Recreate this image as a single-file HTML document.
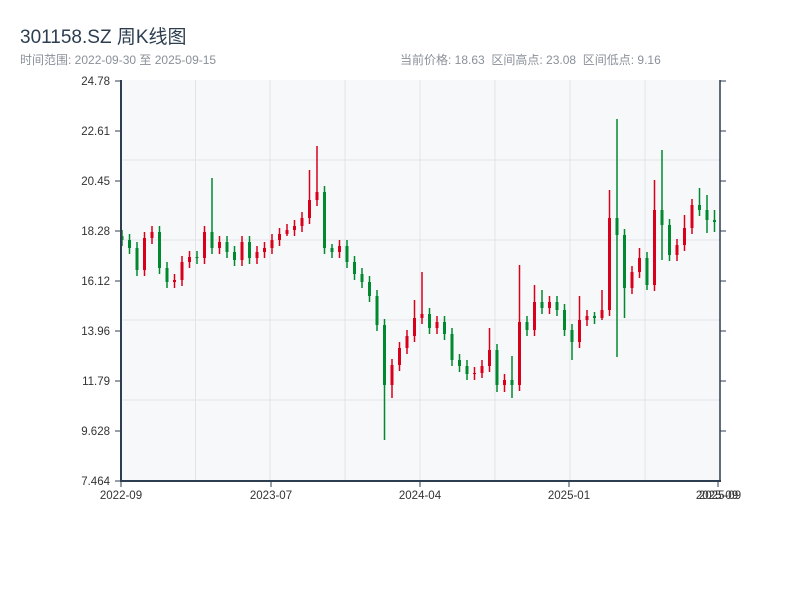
<!DOCTYPE html>
<html><head><meta charset="utf-8"><style>
body{margin:0;width:800px;height:600px;background:#fff;overflow:hidden;font-family:"Liberation Sans","Noto Sans CJK SC",sans-serif;position:relative}
.t{position:absolute;white-space:nowrap}
</style></head><body>
<div class="t" style="left:20px;top:22px;font-size:19px;color:#2c3e50">301158.SZ 周K线图</div>
<div class="t" style="left:20px;top:51px;font-size:12px;color:#8a9099">时间范围: 2022-09-30 至 2025-09-15</div>
<div class="t" style="left:400px;top:51px;font-size:12px;color:#8a9099">当前价格: 18.63 &nbsp;区间高点: 23.08 &nbsp;区间低点: 9.16</div>
<svg width="800" height="600" style="position:absolute;left:0;top:0" font-family="Liberation Sans, sans-serif" font-size="11.5" fill="#333">
<rect x="121" y="80" width="599" height="401" fill="#f7f8fa"/>
<g stroke="#e1e4e8" stroke-width="1">
<path d="M195.5 80V481M270 80V481M345 80V481M420 80V481M495 80V481M570 80V481M645 80V481M121 160H720M121 240H720M121 320H720M121 400H720"/>
</g>
<g stroke="#00892f" fill="none">
<path stroke-width="1.5" d="M122 230V246M129.5 234V254M137 242V276M159.5 226V274M167 262V288M197 251V264M212 178V254M227 236V258M234.5 246V266M249.5 236V264M324.5 186V254M332 244V258M347 240V268M354.5 256V280M362 268V288M369.5 276V302M377 290V331M384.5 319V440M429.5 308V334M444.5 316V340M452 328V366M459.5 354V372M467 360V380M497 344V392M512 356V398M527 316V336M542 290V314M557 296V316M564.5 304V336M572 324V360M594.5 312V324M617 119V357M624.5 229V318M647 252V290M662 150V260M669.5 219V261M699.5 188V216M707 195V233M714.5 210V232"/>
<path stroke-width="3" d="M122 236V240M129.5 240V248M137 248V270M159.5 232V268M167 268V282M197 257V258M212 232V248M227 242V252M234.5 252V260M249.5 242V258M324.5 192V248M332 248V252M347 246V262M354.5 262V274M362 274V282M369.5 282V296M377 296V325M384.5 325V385M429.5 314V328M444.5 322V334M452 334V360M459.5 360V366M467 366V374M497 350V385M512 380V385M527 322V330M542 302V308M557 302V310M564.5 310V330M572 330V342M594.5 316V318M617 218V235M624.5 235V288M647 258V285M662 210V225M669.5 225V255M699.5 205V210M707 210V220M714.5 220V222"/>
</g>
<g stroke="#d9001b" fill="none">
<path stroke-width="1.5" d="M144.5 232V276M152 226V244M174.5 274V288M182 256V286M189.5 251V268M204.5 226V264M219.5 236V254M242 236V266M257 246V264M264.5 242V258M272 234V254M279.5 228V246M287 224V236M294.5 220V236M302 212V232M309.5 170V224M317 146V206M339.5 240V258M392 359V398M399.5 342V371M407 330V354M414.5 300V342M422 272V324M437 316V334M474.5 367V380M482 360V378M489.5 328V372M504.5 374V392M519.5 265V391M534.5 285V336M549.5 296V314M579.5 296V348M587 310V326M602 290V320M609.5 190V316M632 266V294M639.5 248V278M654.5 180V291M677 239V261M684.5 215V251M692 199V234"/>
<path stroke-width="3" d="M144.5 238V270M152 232V238M174.5 280V282M182 262V280M189.5 257V262M204.5 232V258M219.5 242V248M242 242V260M257 252V258M264.5 248V252M272 240V248M279.5 234V240M287 230V234M294.5 226V230M302 218V226M309.5 200V218M317 192V200M339.5 246V252M392 365V385M399.5 348V365M407 336V348M414.5 318V336M422 314V318M437 322V328M474.5 373V374M482 366V373M489.5 350V366M504.5 380V385M519.5 322V385M534.5 302V330M549.5 302V308M579.5 320V342M587 316V320M602 310V318M609.5 218V310M632 272V288M639.5 258V272M654.5 210V285M677 245V255M684.5 228V245M692 205V228"/>
</g>
<g stroke="#2c3e50">
<path stroke-width="2" d="M121 80V482M120 481H721"/>
<path stroke-width="1.5" d="M720 80V482"/>
<path stroke-width="1" d="M115 81H121M115 131H121M115 181H121M115 231H121M115 281H121M115 331H121M115 381H121M115 431H121M115 481H121M720 81H726M720 131H726M720 181H726M720 231H726M720 281H726M720 331H726M720 381H726M720 431H726M121 481V487M271 481V487M420 481V487M569 481V487M718 481V487"/>
</g>
<g text-anchor="end">
<text x="110" y="85">24.78</text><text x="110" y="135">22.61</text><text x="110" y="185">20.45</text><text x="110" y="235">18.28</text><text x="110" y="285">16.12</text><text x="110" y="335">13.96</text><text x="110" y="385">11.79</text><text x="110" y="435">9.628</text><text x="110" y="485">7.464</text>
</g>
<g text-anchor="middle">
<text x="121" y="499">2022-09</text><text x="271" y="499">2023-07</text><text x="420" y="499">2024-04</text><text x="569" y="499">2025-01</text><text x="717" y="499">2025-09</text><text x="720" y="499">2025-09</text>
</g>
</svg>
</body></html>
